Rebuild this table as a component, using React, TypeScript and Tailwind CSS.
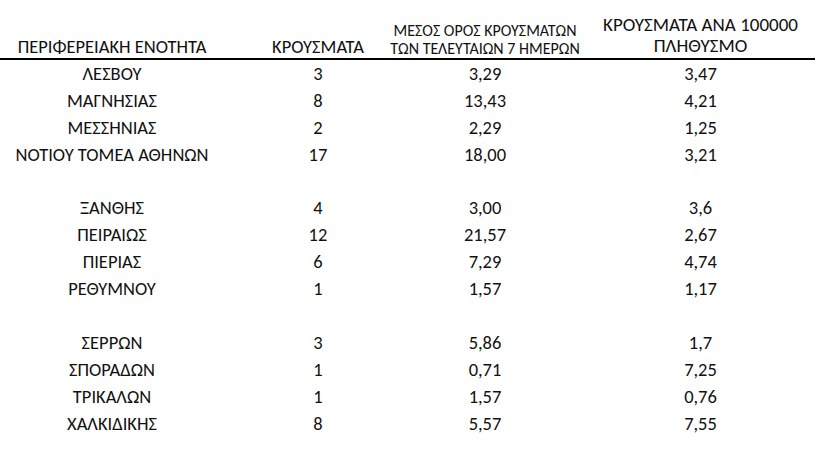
const rows: ([string, string, string, string] | null)[] = [
  ["ΛΕΣΒΟΥ", "3", "3,29", "3,47"],
  ["ΜΑΓΝΗΣΙΑΣ", "8", "13,43", "4,21"],
  ["ΜΕΣΣΗΝΙΑΣ", "2", "2,29", "1,25"],
  ["ΝΟΤΙΟΥ ΤΟΜΕΑ ΑΘΗΝΩΝ", "17", "18,00", "3,21"],
  null,
  ["ΞΑΝΘΗΣ", "4", "3,00", "3,6"],
  ["ΠΕΙΡΑΙΩΣ", "12", "21,57", "2,67"],
  ["ΠΙΕΡΙΑΣ", "6", "7,29", "4,74"],
  ["ΡΕΘΥΜΝΟΥ", "1", "1,57", "1,17"],
  null,
  ["ΣΕΡΡΩΝ", "3", "5,86", "1,7"],
  ["ΣΠΟΡΑΔΩΝ", "1", "0,71", "7,25"],
  ["ΤΡΙΚΑΛΩΝ", "1", "1,57", "0,76"],
  ["ΧΑΛΚΙΔΙΚΗΣ", "8", "5,57", "7,55"],
];

const cols = "grid grid-cols-[224px_188px_146px_257px]";
const cell = "flex justify-center whitespace-nowrap";

export default function App() {
  return (
    <div
      className="w-[821px] h-[452px] bg-white text-[#111] overflow-hidden"
      style={{ fontFamily: "Carlito, 'Open Sans', 'Noto Sans', sans-serif" }}
    >
      <div className={`${cols} h-[60px] items-end border-b-2 border-black w-[815px] text-[18.5px] leading-[20px]`}>
        <div className={`${cell} pb-[1px]`}>ΠΕΡΙΦΕΡΕΙΑΚΗ ΕΝΟΤΗΤΑ</div>
        <div className={`${cell} pb-[1px]`}>ΚΡΟΥΣΜΑΤΑ</div>
        <div className={`${cell} text-[16px] leading-[18px]`}>
          <div className="text-center">
            ΜΕΣΟΣ ΟΡΟΣ ΚΡΟΥΣΜΑΤΩΝ
            <br />
            ΤΩΝ ΤΕΛΕΥΤΑΙΩΝ 7 ΗΜΕΡΩΝ
          </div>
        </div>
        <div className={`${cell} pl-[28px] pb-[2px] text-[19px] leading-[21px]`}>
          <div className="text-center">
            ΚΡΟΥΣΜΑΤΑ ΑΝΑ 100000
            <br />
            ΠΛΗΘΥΣΜΟ
          </div>
        </div>
      </div>
      <div className="text-[18.5px]">
        {rows.map((r, i) =>
          r ? (
            <div key={i} className={`${cols} h-[26.9px] items-center`}>
              <div className={cell}>{r[0]}</div>
              <div className={cell}>{r[1]}</div>
              <div className={cell}>{r[2]}</div>
              <div className={`${cell} pl-[28px]`}>{r[3]}</div>
            </div>
          ) : (
            <div key={i} className="h-[26.9px]" />
          )
        )}
      </div>
    </div>
  );
}
